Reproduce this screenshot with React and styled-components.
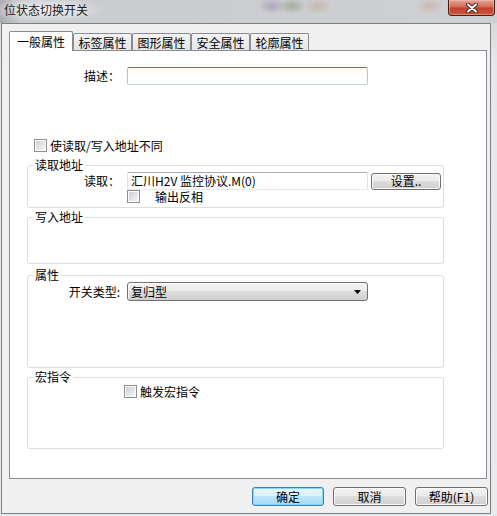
import React from "react";
import styled, { createGlobalStyle } from "styled-components";

const GlobalStyle = createGlobalStyle`
  html, body {
    margin: 0;
    padding: 0;
  }
  body {
    width: 497px;
    height: 516px;
    overflow: hidden;
    font-family: "Noto Sans CJK SC", "Liberation Sans", sans-serif;
    font-size: 12px;
    color: #000;
  }
  * {
    box-sizing: border-box;
  }
`;

function CloseIcon() {
  return (
    <svg width="12" height="10" viewBox="0 0 12 10">
      <path d="M2 1.5 L10 8.5 M10 1.5 L2 8.5" stroke="#3a2a28" strokeWidth="4" strokeLinecap="round" />
      <path d="M2 1.5 L10 8.5 M10 1.5 L2 8.5" stroke="#fff" strokeWidth="2" strokeLinecap="round" />
    </svg>
  );
}

function ArrowIcon() {
  return (
    <svg width="7" height="4" viewBox="0 0 7 4">
      <polygon points="0,0 7,0 3.5,4" fill="#000" />
    </svg>
  );
}

const tabs = ["一般属性", "标签属性", "图形属性", "安全属性", "轮廓属性"];

export default function App() {
  return (
    <>
      <GlobalStyle />
      <Frame>
        <TitleBar>
          <Title>位状态切换开关</Title>
          <CloseButton>
            <CloseIcon />
          </CloseButton>
        </TitleBar>
        <Client>
          <TabRow>
            {tabs.map((t, i) => (
              <Tab key={t} $active={i === 0}>
                {t}
              </Tab>
            ))}
          </TabRow>
          <Panel>
            <FieldRow $indent={30} $top={16}>
              <Label>描述：</Label>
              <TextBox $focused />
            </FieldRow>

            <CheckRow $indent={24} $gap={3} $top={54}>
              <Check />
              <span>使读取/写入地址不同</span>
            </CheckRow>

            <Group $top={6}>
              <Legend>读取地址</Legend>
              <GroupBody $h={35}>
                <FieldRow $indent={12}>
                  <Label>读取：</Label>
                  <TextBox>汇川H2V 监控协议.M(0)</TextBox>
                  <Button $w={70} $h={17} $gapLeft={-4}>
                    设置..
                  </Button>
                </FieldRow>
                <CheckRow $indent={99} $gap={15}>
                  <Check />
                  <span>输出反相</span>
                </CheckRow>
              </GroupBody>
            </Group>

            <Group $top={2}>
              <Legend>写入地址</Legend>
              <GroupBody $h={39} />
            </Group>

            <Group $top={4}>
              <Legend>属性</Legend>
              <GroupBody $h={85}>
                <FieldRow $indent={12}>
                  <Label>开关类型:</Label>
                  <Select>
                    <span>复归型</span>
                    <ArrowIcon />
                  </Select>
                </FieldRow>
              </GroupBody>
            </Group>

            <Group $top={2}>
              <Legend>宏指令</Legend>
              <GroupBody $h={63}>
                <CheckRow $indent={96} $gap={3} $top={1}>
                  <Check />
                  <span>触发宏指令</span>
                </CheckRow>
              </GroupBody>
            </Group>
          </Panel>

          <ButtonRow>
            <Button $w={72} $h={19} $primary>
              确定
            </Button>
            <Button $w={73} $h={19}>
              取消
            </Button>
            <Button $w={73} $h={19}>
              帮助(F1)
            </Button>
          </ButtonRow>
        </Client>
      </Frame>
    </>
  );
}

const Frame = styled.div`
  width: 497px;
  height: 516px;
  display: flex;
  flex-direction: column;
  background: linear-gradient(to bottom, #c4c6ca 0px, #d8d9dc 22px, #e6e7ea 60px, #e9eaec 100%);
`;

const TitleBar = styled.div`
  height: 23px;
  flex: none;
  display: flex;
  align-items: flex-start;
  justify-content: space-between;
  padding: 0 2px 0 4px;
  background:
    radial-gradient(ellipse 60px 12px at 46px 10px, rgba(255, 255, 255, 0.8), rgba(255, 255, 255, 0)),
    radial-gradient(ellipse 14px 8px at 272px 6px, rgba(110, 90, 150, 0.35), rgba(110, 90, 150, 0)),
    radial-gradient(ellipse 14px 8px at 292px 6px, rgba(80, 110, 60, 0.35), rgba(80, 110, 60, 0)),
    radial-gradient(ellipse 14px 8px at 318px 6px, rgba(170, 120, 60, 0.25), rgba(170, 120, 60, 0)),
    radial-gradient(ellipse 14px 8px at 430px 6px, rgba(200, 110, 80, 0.25), rgba(200, 110, 80, 0)),
    linear-gradient(to right, #a9abaf 0px, #c9cbce 20px, #cfd0d3 100%);
`;

const Title = styled.div`
  margin-top: 3px;
  font-size: 12px;
  line-height: 14px;
  color: #1a1a22;
`;

const CloseButton = styled.div`
  width: 47px;
  height: 16px;
  display: flex;
  align-items: center;
  justify-content: center;
  border: 1px solid #4a1c16;
  border-top: none;
  border-radius: 0 0 4px 4px;
  background: linear-gradient(to bottom, #e4a494 0%, #d46d56 45%, #c2432b 55%, #c9583d 100%);
  box-shadow: inset 0 0 0 1px rgba(255, 200, 190, 0.45);
`;

const Client = styled.div`
  flex: 1;
  margin: 0 6px 2px 1px;
  border: 1px solid #7d7f83;
  background: #f0f0f0;
  padding: 7px 3px 7px 7px;
  display: flex;
  flex-direction: column;
`;

const TabRow = styled.div`
  display: flex;
  align-items: flex-end;
  height: 20px;
  margin-bottom: -1px;
  position: relative;
  z-index: 1;
`;

const Tab = styled.div`
  width: ${(p) => (p.$active ? 64 : 59)}px;
  height: ${(p) => (p.$active ? 20 : 17)}px;
  margin-bottom: ${(p) => (p.$active ? 0 : 1)}px;
  border: 1px solid #898c95;
  border-bottom: none;
  border-radius: 2px 2px 0 0;
  background: ${(p) =>
    p.$active ? "#fff" : "linear-gradient(to bottom, #f4f4f4, #e6e6e6)"};
  display: flex;
  align-items: center;
  justify-content: center;
  padding-top: ${(p) => (p.$active ? 0 : 1)}px;
  line-height: 14px;
`;

const Panel = styled.div`
  height: 429px;
  flex: none;
  border: 1px solid #898c95;
  background: #fff;
  display: flex;
  flex-direction: column;
  position: relative;
`;

const FieldRow = styled.div`
  display: flex;
  align-items: center;
  gap: 7px;
  padding-left: ${(p) => p.$indent}px;
  margin-top: ${(p) => p.$top || 0}px;
`;

const Label = styled.span`
  width: 80px;
  text-align: right;
  line-height: 14px;
  white-space: nowrap;
`;

const TextBox = styled.div`
  width: 241px;
  height: 18px;
  padding: 0 3px;
  display: flex;
  align-items: center;
  line-height: 14px;
  white-space: nowrap;
  border: 1px solid;
  border-radius: 2px;
  border-color: ${(p) =>
    p.$focused
      ? "#3d7bad #a4c9e3 #b7d9ed #a4c9e3"
      : "#abadb3 #dbdfe6 #e3e9ef #e2e3ea"};
  background: #fff;
`;

const Select = styled.div`
  width: 241px;
  height: 19px;
  padding: 0 6px 0 3px;
  display: flex;
  align-items: center;
  justify-content: space-between;
  line-height: 14px;
  border: 1px solid #707070;
  border-radius: 3px;
  background: linear-gradient(to bottom, #f2f2f2 0%, #ebebeb 50%, #dddddd 50%, #cfcfcf 100%);
  box-shadow: inset 1px 1px 0 #fcfcfc;
`;

const CheckRow = styled.div`
  display: flex;
  align-items: center;
  gap: ${(p) => p.$gap}px;
  height: 13px;
  padding-left: ${(p) => p.$indent}px;
  margin-top: ${(p) => p.$top || 0}px;
  line-height: 14px;
`;

const Check = styled.span`
  width: 13px;
  height: 13px;
  flex: none;
  border: 1px solid #8e8f8f;
  background: linear-gradient(135deg, #c9ccd1 0%, #e3e5e8 55%, #f7f7f7 100%);
  box-shadow: inset 0 0 0 1px #fbfbfb;
`;

const Group = styled.fieldset`
  width: 417px;
  margin: ${(p) => p.$top}px 0 0 17px;
  padding: 0;
  border: 1px solid #d5dfe5;
  border-radius: 3px;
  min-inline-size: 0;
`;

const Legend = styled.legend`
  margin-left: 5px;
  padding: 0 2px;
  font-size: 12px;
  line-height: 14px;
`;

const GroupBody = styled.div`
  height: ${(p) => p.$h}px;
`;

const Button = styled.button`
  width: ${(p) => p.$w}px;
  height: ${(p) => p.$h}px;
  margin-left: ${(p) => p.$gapLeft || 0}px;
  padding: 0;
  font-family: inherit;
  font-size: 12px;
  line-height: 14px;
  color: #000;
  border: 1px solid ${(p) => (p.$primary ? "#3c7fb1" : "#707070")};
  border-radius: 3px;
  background: ${(p) =>
    p.$primary
      ? "linear-gradient(to bottom, #eaf6fd 0%, #d9f0fc 50%, #bee6fd 50%, #a7d9f5 100%)"
      : "linear-gradient(to bottom, #f2f2f2 0%, #ebebeb 50%, #dddddd 50%, #cfcfcf 100%)"};
  box-shadow: inset 0 0 0 1px ${(p) => (p.$primary ? "#7fd9f7" : "#fbfbfb")};
`;

const ButtonRow = styled.div`
  display: flex;
  justify-content: flex-end;
  gap: 9px;
  margin-top: 8px;
  margin-right: -1px;
`;
